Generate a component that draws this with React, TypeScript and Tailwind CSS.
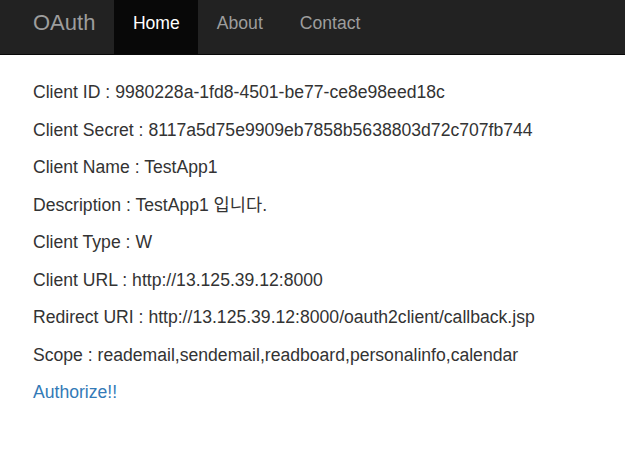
const rows: [string, string][] = [
  ["Client ID", "9980228a-1fd8-4501-be77-ce8e98eed18c"],
  ["Client Secret", "8117a5d75e9909eb7858b5638803d72c707fb744"],
  ["Client Name", "TestApp1"],
  ["Description", "TestApp1 입니다."],
  ["Client Type", "W"],
  ["Client URL", "http://13.125.39.12:8000"],
  ["Redirect URI", "http://13.125.39.12:8000/oauth2client/callback.jsp"],
  ["Scope", "reademail,sendemail,readboard,personalinfo,calendar"],
]

export default function App() {
  return (
    <div className="min-h-[449px] bg-white font-['Liberation_Sans','Noto_Sans_CJK_KR',sans-serif] text-[#333]">
      <nav className="flex h-[55px] items-stretch border-b border-[#080808] bg-[#222] pl-[33px]">
        <a className="mr-[19px] pt-[11px] text-[22px] leading-[24px] text-[#9d9d9d]">OAuth</a>
        {["Home", "About", "Contact"].map((item, i) => (
          <a
            key={item}
            className={
              "px-[18.5px] pt-[12px] text-[17.6px] leading-[22px] " +
              (i === 0 ? "bg-[#080808] text-white" : "text-[#9d9d9d]")
            }
          >
            {item}
          </a>
        ))}
      </nav>
      <div className="px-[33px] pt-[26px]">
        {rows.map(([k, v]) => (
          <p key={k} className="mb-[15px] text-[17.6px] leading-[22.5px]">
            {k} : {v}
          </p>
        ))}
        <a className="text-[17.6px] leading-[22.5px] text-[#337ab7]">Authorize!!</a>
      </div>
    </div>
  )
}
